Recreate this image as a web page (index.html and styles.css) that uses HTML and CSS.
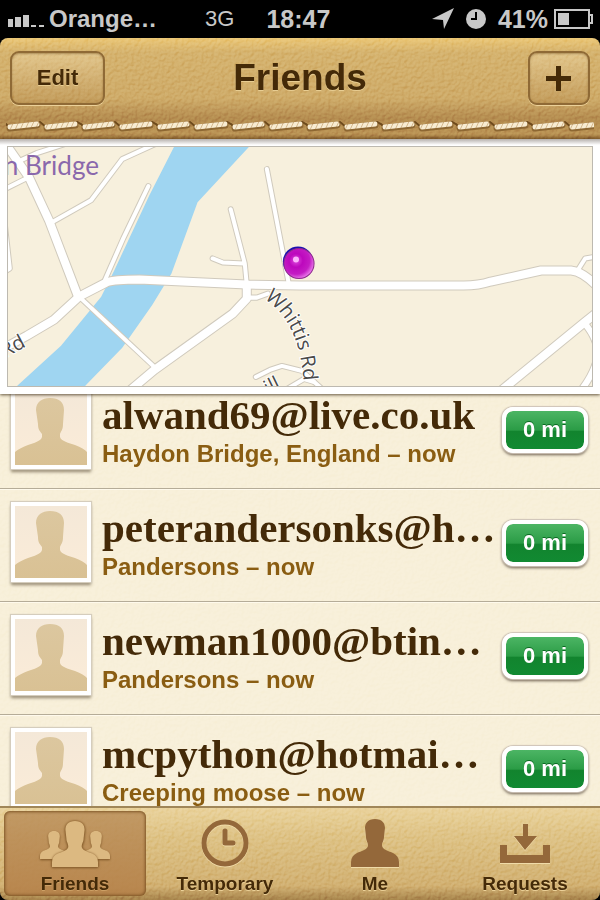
FILE: index.html
```html
<!DOCTYPE html>
<html lang="en">
<head>
  <meta charset="UTF-8" />
  <meta name="viewport" content="width=device-width, initial-scale=1" />
  <title>Friends</title>
  <link rel="stylesheet" href="styles.css">
</head>
<body>

  <!-- shared shapes and textures -->
  <svg class="defs" aria-hidden="true">
    <filter id="leather" x="0" y="0" width="100%" height="100%" color-interpolation-filters="sRGB">
      <feTurbulence type="fractalNoise" baseFrequency="0.3" numOctaves="2" seed="4" />
      <feDiffuseLighting surfaceScale="2" diffuseConstant="0.6" lighting-color="#fff">
        <feDistantLight azimuth="235" elevation="56" />
      </feDiffuseLighting>
    </filter>
    <linearGradient id="skin" x1="0" y1="0" x2="0" y2="1">
      <stop offset="0" stop-color="#dcc79f" />
      <stop offset="1" stop-color="#d9c194" />
    </linearGradient>
    <symbol id="avatar" viewBox="0 0 72 72">
      <path fill="url(#skin)" d="M35 5C44 5 49 9 49 17L48 31C48 37 46 38 45 41V44C46 48 54 50 60 52C66 54 70 57 72 59V72H0V59C3 56 8 54 13 52C19 50 26 48 27 44V41C25 38 23 37 23 31L21 17C21 9 27 5 35 5Z" />
    </symbol>
    <symbol id="person" viewBox="0 0 48 48">
      <path d="M24 0C31 0 34 4 34 9L33 18C33 22 31 23 31 27C32 31 38 32 42 34C46 36 48 39 48 43V48H0V43C0 39 2 36 6 34C10 32 16 31 17 27C17 23 15 22 15 18L14 9C14 4 17 0 24 0Z" />
    </symbol>
  </svg>

  <div class="status-bar">
    <svg class="signal" viewBox="0 0 36 12" aria-hidden="true">
      <path d="M0 4h5v8H0zM7 2h6v10H7zM15 0h6v12h-6zM23 10h5v2h-5zM31 10h5v2h-5z" />
    </svg>
    <span class="carrier">Orange…</span>
    <span class="network">3G</span>
    <span class="clock">18:47</span>
    <span class="status-right">
      <svg class="arrow" viewBox="0 0 22 22" aria-hidden="true">
        <path d="M22 0L12 21L11 12L0 11Z" />
      </svg>
      <svg class="alarm" viewBox="0 0 20 20" aria-hidden="true">
        <circle cx="10" cy="10" r="10" />
        <path d="M10 3V10H5" fill="none" stroke="#000" stroke-width="2" />
      </svg>
      <span>41%</span>
      <svg class="battery" viewBox="0 0 40 20" aria-hidden="true">
        <path d="M1 1H35V19H1ZM35 6H38V14H35" fill="none" stroke="#c8c8c8" stroke-width="2" />
        <rect x="4" y="4" width="11" height="12" />
      </svg>
    </span>
  </div>

  <header class="navbar">
    <svg class="texture" aria-hidden="true"><rect width="100%" height="100%" filter="url(#leather)" /></svg>
    <div class="navbar-row">
      <button type="button" class="nav-button edit">Edit</button>
      <h1>Friends</h1>
      <button type="button" class="nav-button add" aria-label="Add friend">
        <svg viewBox="0 0 26 26" aria-hidden="true"><path d="M10 1h5v10h10v5H15v10h-5V16H0v-5h10z" /></svg>
      </button>
    </div>
    <svg class="stitches" aria-hidden="true">
      <defs>
        <pattern id="thread" width="5" height="6" patternUnits="userSpaceOnUse" patternTransform="skewX(-25)">
          <rect width="5" height="6" fill="#f8ecd2" />
          <rect width="1" height="6" fill="#d3b78b" />
        </pattern>
        <pattern id="stitch" width="75" height="20" patternUnits="userSpaceOnUse">
          <g fill="none" stroke-linecap="round">
            <path d="M0 8L3 11M34 6L40 11M71 6L75 8" stroke="#6e4a1c" stroke-width="2" />
            <path d="M4 12L31 9M41 12L69 9" stroke="#8d6732" stroke-width="7" />
            <path d="M4 11L31 8M41 11L69 8" stroke="url(#thread)" stroke-width="5" />
          </g>
        </pattern>
      </defs>
      <rect width="100%" height="20" fill="url(#stitch)" />
    </svg>
  </header>

  <section class="map-panel" aria-label="Map">
    <svg class="map" viewBox="8 147 584 238" preserveAspectRatio="xMidYMid slice">
      <defs>
        <radialGradient id="pin" cx="0.4" cy="0.4" r="0.65">
          <stop offset="0" stop-color="#e04ee0" />
          <stop offset="0.35" stop-color="#bd08bd" />
          <stop offset="0.7" stop-color="#c41cc4" />
          <stop offset="1" stop-color="#f08af0" />
        </radialGradient>
        <path id="whittis" d="M264 298C288 314 303 341 304 392" />
        <g id="minor-roads">
          <path d="M6 189L30 177M18 162L38 153L66 144M53 222L92 200L123 159L156 144" />
          <path d="M149 186L124 238L106 279M80 296L155 366" />
          <path d="M231 209L245 263L247 284M213 258L223 262L244 263M267 169L289 284" />
          <path d="M247 297H257L268 293M6 224L11 268L5 272M256 376L270 369L282 365L302 370L322 388" />
          <path d="M577 269L584 258L596 256M287 388L304 378L314 381" />
        </g>
        <g id="major-roads">
          <path d="M4 348L28 335L55 319L80 296L107 282Q115 279 140 279L247 284L300 285H463Q478 285 490 281L540 270H570Q582 271 598 288" />
          <path d="M9 147L30 177L50 220L79 296M130 390L155 369L233 313L247 298V284" />
          <path d="M501 389L583 322L598 310" />
        </g>
      </defs>
      <rect x="0" y="140" width="600" height="260" fill="#f7f0dd" />
      <path d="M175 146H250L198 202L172 273L153 304L123 347L84 387H16L62 345L102 296L115 270L150 195Z" fill="#9fd5f1" />
      <g fill="none" stroke-linejoin="round" stroke-linecap="round">
        <use href="#minor-roads" stroke="#d0cabd" stroke-width="6" />
        <path d="M583 322Q602 345 594 364Q590 376 580 389" stroke="#d0cabd" stroke-width="8" />
        <use href="#major-roads" stroke="#d0cabd" stroke-width="10" />
        <use href="#minor-roads" stroke="#fff" stroke-width="4" />
        <path d="M583 322Q602 345 594 364Q590 376 580 389" stroke="#fff" stroke-width="6" />
        <use href="#major-roads" stroke="#fff" stroke-width="8" />
      </g>
      <text x="5" y="175" class="map-place">n Bridge</text>
      <text class="map-road" transform="translate(6 357) rotate(-28)">Rd</text>
      <text class="map-road"><textPath href="#whittis">Whittis Rd</textPath></text>
      <text class="map-road" transform="translate(268 394) rotate(-26)">ill</text>
      <circle cx="298" cy="261" r="15" fill="#1c10b0" />
      <circle cx="299" cy="263" r="15" fill="url(#pin)" stroke="#8e2b8e" stroke-width="1" />
      <circle cx="296" cy="259" r="3" fill="#fbb4fb" />
    </svg>
  </section>

  <main class="friends">
    <svg class="texture paper" aria-hidden="true"><rect width="100%" height="100%" filter="url(#leather)" /></svg>
    <ul>
      <li>
        <svg class="avatar" aria-hidden="true"><use href="#avatar" /></svg>
        <div class="info">
          <h2>alwand69@live.co.uk</h2>
          <p>Haydon Bridge, England – now</p>
        </div>
        <span class="distance">0 mi</span>
      </li>
      <li>
        <svg class="avatar" aria-hidden="true"><use href="#avatar" /></svg>
        <div class="info">
          <h2>peterandersonks@h…</h2>
          <p>Pandersons – now</p>
        </div>
        <span class="distance">0 mi</span>
      </li>
      <li>
        <svg class="avatar" aria-hidden="true"><use href="#avatar" /></svg>
        <div class="info">
          <h2>newman1000@btin…</h2>
          <p>Pandersons – now</p>
        </div>
        <span class="distance">0 mi</span>
      </li>
      <li>
        <svg class="avatar" aria-hidden="true"><use href="#avatar" /></svg>
        <div class="info">
          <h2>mcpython@hotmai…</h2>
          <p>Creeping moose – now</p>
        </div>
        <span class="distance">0 mi</span>
      </li>
    </ul>
  </main>

  <nav class="tabbar">
    <svg class="texture" aria-hidden="true"><rect width="100%" height="100%" filter="url(#leather)" /></svg>
    <a href="#friends" class="tab active" aria-current="page">
      <svg viewBox="0 0 72 48" aria-hidden="true">
        <use href="#person" x="1" y="12" width="28" height="28" />
        <use href="#person" x="43" y="12" width="28" height="28" />
        <use href="#person" x="13" y="2" width="46" height="46" class="front" />
      </svg>
      Friends
    </a>
    <a href="#temporary" class="tab">
      <svg viewBox="0 0 72 48" aria-hidden="true">
        <circle cx="36" cy="24" r="21" fill="none" stroke="#94683a" stroke-width="5" />
        <path d="M36 12V24H44" fill="none" stroke="#94683a" stroke-width="5" stroke-linecap="round" stroke-linejoin="round" />
      </svg>
      Temporary
    </a>
    <a href="#me" class="tab">
      <svg viewBox="0 0 72 48" aria-hidden="true">
        <use href="#person" x="12" y="0" width="48" height="48" />
      </svg>
      Me
    </a>
    <a href="#requests" class="tab">
      <svg viewBox="0 0 72 48" aria-hidden="true">
        <path d="M34 5h5v12h9L36 31L25 17h9zM11 26h7v10h36V26h7v18H11z" />
      </svg>
      Requests
    </a>
  </nav>

</body>
</html>
```
FILE: styles.css
```css
* {
  box-sizing: border-box;
}
body {
  margin: 0;
  height: 100vh;
  display: flex;
  flex-direction: column;
  overflow: hidden;
  background: #000;
  font-family: "Liberation Sans", Arial, sans-serif;
  font-weight: bold;
  color: #442a08;
}
h1, h2, p, ul {
  margin: 0;
  padding: 0;
}
.defs {
  position: absolute;
  width: 0;
  height: 0;
}
.texture {
  position: absolute;
  top: 0;
  left: 0;
  width: 100%;
  height: 100%;
  mix-blend-mode: overlay;
  opacity: 0.3;
  pointer-events: none;
}

/* status bar */
.status-bar {
  flex: none;
  height: 38px;
  padding: 0 6px 0 8px;
  display: flex;
  align-items: center;
  color: #c8c8c8;
  font-size: 25px;
}
.status-bar svg {
  fill: #c8c8c8;
}
.signal {
  width: 36px;
  height: 12px;
  margin: 4px 5px 0 0;
}
.carrier {
  font-size: 24px;
}
.network {
  margin-left: 48px;
  font-size: 22px;
  font-weight: normal;
}
.clock {
  margin-left: 32px;
}
.status-right {
  margin-left: auto;
  display: flex;
  align-items: center;
}
.arrow {
  width: 22px;
  height: 22px;
  margin-right: 12px;
}
.alarm {
  width: 20px;
  height: 20px;
  margin-right: 12px;
}
.battery {
  width: 40px;
  height: 20px;
  margin-left: 6px;
}

/* leather header */
.navbar {
  flex: none;
  position: relative;
  isolation: isolate;
  overflow: hidden;
  padding-top: 13px;
  border-radius: 8px 8px 0 0;
  background: linear-gradient(#ecc878, #d6b470 14px, #cfac6a 60%, #b58d50 80%, #bc9556 95%, #8d6530);
}
.navbar-row {
  position: relative;
  display: grid;
  grid-template-columns: 1fr auto 1fr;
  align-items: center;
  padding: 0 10px;
}
.navbar h1 {
  font-size: 37px;
  line-height: 54px;
  text-shadow: 0 1px 0 #e8cd92;
}
.nav-button {
  height: 54px;
  padding: 0;
  border: 2px solid #8f6a36;
  border-radius: 9px;
  background: linear-gradient(rgba(255, 240, 205, 0.3), rgba(150, 100, 40, 0.2));
  box-shadow: 0 1px 0 #ecd199, inset 0 1px 2px rgba(90, 55, 10, 0.4);
  color: #442a08;
  font: bold 22px "Liberation Sans", Arial, sans-serif;
  text-shadow: 0 1px 0 #e8cd92;
}
.edit {
  width: 95px;
}
.add {
  width: 62px;
  justify-self: end;
  display: flex;
  align-items: center;
  justify-content: center;
}
.add svg {
  width: 26px;
  height: 26px;
  fill: #442a08;
}
.stitches {
  position: relative;
  display: block;
  width: calc(100% - 12px);
  height: 20px;
  margin: 11px 6px 3px;
}

/* map */
.map-panel {
  flex: none;
  position: relative;
  z-index: 1;
  padding: 7px;
  background: linear-gradient(#b5b0ac, #fff 6px);
  box-shadow: 0 1px 3px rgba(60, 45, 20, 0.8);
}
.map {
  display: block;
  width: 100%;
  height: 241px;
  border: 1px solid #bdb9b0;
}
.map-place {
  font: 26px Lato, sans-serif;
  fill: #8a68ac;
}
.map-road {
  font: 20px "Open Sans", sans-serif;
  fill: #4a4a4a;
  stroke: #fff;
  stroke-width: 2px;
  paint-order: stroke;
}

/* list, scrolled a little under the map */
.friends {
  flex: 1;
  min-height: 0;
  margin-top: -18px;
  position: relative;
  isolation: isolate;
  overflow: hidden;
  background: #f8f0da;
}
.paper {
  opacity: 0.2;
}
.friends ul {
  list-style: none;
}
.friends li {
  position: relative;
  display: flex;
  align-items: flex-start;
  height: 113px;
  padding: 0 12px 0 11px;
  border-bottom: 1px solid #b5ac98;
  box-shadow: 0 1px 0 #fffaec;
}
.avatar {
  flex: none;
  width: 80px;
  height: 80px;
  margin-top: 13px;
  border: 4px solid #fff;
  background: linear-gradient(#f4e8d8, #fbecd8);
  box-shadow: 0 0 1px 1px #d5cdbd, 0 3px 3px rgba(80, 65, 40, 0.6);
}
.info {
  flex: 1;
  min-width: 0;
  padding: 15px 0 0 11px;
  white-space: nowrap;
}
.info h2 {
  font-family: "Liberation Serif", "Times New Roman", serif;
  font-size: 41px;
  line-height: 48px;
}
.info p {
  font-size: 24px;
  line-height: 30px;
  color: #8a5d12;
}
.distance {
  flex: none;
  width: 86px;
  height: 46px;
  margin-top: 31px;
  border: 4px solid #fff;
  border-radius: 11px;
  background: linear-gradient(#4cb564, #2b9c46 50%, #12842e 54%, #118a32) padding-box;
  box-shadow: 0 0 1px 1px #cfc4b8, 0 2px 3px rgba(70, 55, 40, 0.8);
  color: #fff;
  font-size: 22px;
  line-height: 38px;
  text-align: center;
  text-shadow: 0 -1px 0 #0b6a22;
}

/* bottom tabs */
.tabbar {
  flex: none;
  position: relative;
  isolation: isolate;
  z-index: 1;
  overflow: hidden;
  display: grid;
  grid-template-columns: repeat(4, 1fr);
  border-top: 2px solid #a08658;
  border-radius: 0 0 8px 8px;
  background: linear-gradient(#ead39d, #dfc488 30%, #d2b173 85%, #a8854c);
}
.tab {
  position: relative;
  display: flex;
  flex-direction: column;
  align-items: center;
  margin: 3px 4px 4px;
  padding-top: 8px;
  border-radius: 6px;
  color: #442a08;
  font-size: 19px;
  line-height: 33px;
  height: 85px;
  text-decoration: none;
  text-shadow: 0 1px 0 #ecd199;
}
.tab svg {
  flex: none;
  width: 72px;
  height: 48px;
  fill: #94683a;
  filter: drop-shadow(0 1px 0 #f0dba8);
}
.tab.active {
  background: linear-gradient(rgba(184, 140, 88, 0.8), rgba(182, 130, 74, 0.9));
  box-shadow: inset 0 0 3px 1px #7c5424;
  text-shadow: 0 1px 0 #cda066;
}
.tab.active svg {
  fill: #dcb981;
  filter: drop-shadow(0 1px 1px #7c5424);
}
.front {
  filter: drop-shadow(0 0 1px #8a602e);
}
```
